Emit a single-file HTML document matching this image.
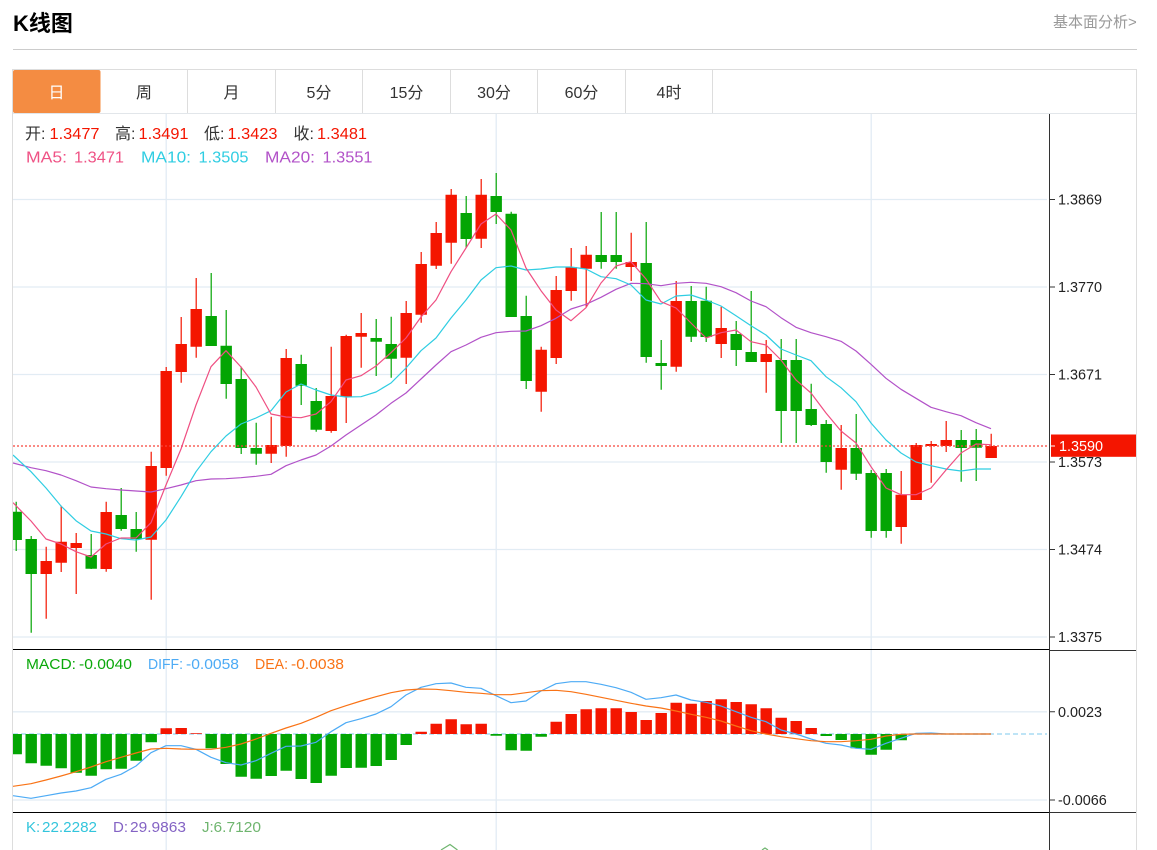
<!DOCTYPE html>
<html lang="zh">
<head>
<meta charset="utf-8">
<title>K线图</title>
<style>
html,body{margin:0;padding:0;background:#fff;width:1157px;height:850px;overflow:hidden}
svg{display:block}
text{font-family:"Liberation Sans","Noto Sans CJK SC",sans-serif;white-space:pre}
.ax{font-size:14.4px;fill:#222}
.tab{font-size:16px;fill:#333;text-anchor:middle}
.i{font-size:16px}
.m{font-size:15px}
</style>
</head>
<body>
<svg width="1157" height="850" viewBox="0 0 1157 850" xmlns="http://www.w3.org/2000/svg">
<defs><clipPath id="c"><rect x="13" y="114" width="1036" height="736"/></clipPath></defs>

<text x="13" y="31" font-size="22" font-weight="700" fill="#000">K线图</text>
<text x="1053" y="27" font-size="15" fill="#999">基本面分析&gt;</text>
<path d="M13 49.500H1137" stroke="#ccc" stroke-width="1"/>

<!-- panel -->
<path d="M12.500 850V69.500H1136.500V850" fill="none" stroke="#ddd"/>
<path d="M13 113.500H1136" stroke="#e2e6ea"/>
<path d="M187.500 70V113M275.500 70V113M362.500 70V113M450.500 70V113M537.500 70V113M625.500 70V113M712.500 70V113" stroke="#ddd"/>
<rect x="13" y="70" width="87.500" height="43" rx="2" fill="#f48c42"/>
<text x="56.500" y="98" class="tab" style="fill:#fff">日</text>
<text x="144" y="98" class="tab">周</text>
<text x="231.500" y="98" class="tab">月</text>
<text x="319" y="98" class="tab">5分</text>
<text x="406.500" y="98" class="tab">15分</text>
<text x="494" y="98" class="tab">30分</text>
<text x="581.500" y="98" class="tab">60分</text>
<text x="669" y="98" class="tab">4时</text>

<!-- grid -->
<g stroke="#e2ecf4" stroke-width="1.300" fill="none">
<path d="M166.200 114V850M496.200 114V850M871.200 114V850"/>
<path d="M13 199.500H1047M13 287H1047M13 374.500H1047M13 462H1047M13 549.500H1047M13 637H1047M13 711.800H1047M13 800H1047"/>
</g>
<path d="M13 734H1047" stroke="#a8dcf3" stroke-width="1.500" stroke-dasharray="5 3"/>

<g clip-path="url(#c)" fill="none">
<!-- red wicks -->
<path stroke="#f41500" stroke-width="1.200" d="M46.200 546.700V618.700M61.200 505.700V572M76.200 533V594M106.200 501.700V571.700M151.200 451.700V599.700M166.200 367V475.700M181.200 317V382.700M196.200 278V357.700M271.200 416.700V463M286.200 349V456.700M331.200 346.700V432.700M346.200 334.700V423M361.200 313V367.700M406.200 301V384M421.200 252V322.700M436.200 222V269M451.200 189V263.700M481.200 179V248M541.200 346.700V411.700M556.200 276V364M571.200 248V300.700M586.200 246V306.700M631.200 232.700V281M676.200 281V371.700M721.200 306.700V358M766.200 340V392.700M841.200 425V489.700M901.200 471V543.700M916.200 443V500M931.200 441V482.700M946.200 421V452M991.200 433.700V458"/>
<!-- red bodies -->
<path stroke="#f41500" stroke-width="11.400" d="M46.200 561V574M61.200 541.700V562.700M76.200 543V548M106.200 512V569M151.200 466V539.700M166.200 371V468M181.200 344V372M196.200 309V346.700M271.200 445V453.700M286.200 358V446M331.200 396V431M346.200 336V396.700M361.200 333V336.700M406.200 313V357.700M421.200 264V314.700M436.200 233V265.700M451.200 194.700V242.700M481.200 194.700V238.700M541.200 349.700V391.700M556.200 290V358M571.200 267V291M586.200 254.700V268.700M631.200 262V267M676.200 301V366.700M721.200 328V344M766.200 354V362M841.200 448V469.700M901.200 494.700V527M916.200 445V500M931.200 444V446M946.200 440V446M991.200 446V458"/>
<!-- green wicks -->
<path stroke="#03a503" stroke-width="1.200" d="M16.200 501.700V551M31.200 536V632.700M91.200 534V569M121.200 488V530.700M136.200 512V551.700M211.200 273V346M226.200 310V398.700M241.200 366.700V454M256.200 422.700V464.700M301.200 354.700V405M316.200 388V431.700M376.200 319V376M391.200 316.700V377.700M466.200 196V248M496.200 173V224M511.200 211.700V317M526.200 295.700V389M601.200 212V268.700M616.200 212V268.700M646.200 222V362.700M661.200 340V389.700M691.200 286V342M706.200 286.700V342M736.200 321V366M751.200 291V362M781.200 339V443M796.200 339V443M811.200 383.700V426M826.200 420V472.700M856.200 414V480M871.200 470V537.700M886.200 469V537.700M961.200 430V481.700M976.200 429V481"/>
<!-- green bodies -->
<path stroke="#03a503" stroke-width="11.400" d="M16.200 511.700V540M31.200 539V574M91.200 555V568.700M121.200 515V529M136.200 529V539M211.200 316V346M226.200 345.700V384M241.200 379V448M256.200 448V453.700M301.200 364V385.700M316.200 401V429.700M376.200 338V341.700M391.200 344V358.700M466.200 213V239M496.200 196V212M511.200 213.700V317M526.200 316V381M601.200 255V262M616.200 255V262M646.200 263V357M661.200 363V366M691.200 301V336.700M706.200 300.700V337M736.200 334V350M751.200 352V362M781.200 360V411M796.200 360V411M811.200 409V425M826.200 424V462M856.200 448V473.700M871.200 473V531M886.200 473V531M961.200 440V448M976.200 440V447.700"/>

<!-- price line -->
<path d="M13 446H1047" stroke="#f8453a" stroke-width="1.300" stroke-dasharray="2 2"/>

<!-- MA20 -->
<polyline stroke="#b252c8" stroke-width="1.200" stroke-linejoin="round" points="13,463 31,467.700 46,470.700 61,475 76,480.700 91,487 106,488.700 121,490 136,491 151,492 166,488.700 181,485 196,480.700 211,479 226,478.700 241,477.700 256,476.300 271,474.300 286,465.700 301,460 316,455 331,446 346,435 361,425 376,415 391,403.300 406,393 421,379 436,365 451,351.700 466,345 481,337.300 496,332.700 511,331.300 526,331 541,325.700 556,318.300 571,309 586,304.300 601,297.300 616,289.300 631,283.300 646,283.700 661,285.700 676,283.300 691,282.300 706,283.300 721,286.700 736,292.700 751,301 766,306.700 781,317.700 796,327.300 811,332.700 826,336.700 841,341.300 856,351 871,364.300 886,378.300 901,389.300 916,398.300 931,407.300 946,411.700 961,415.700 976,422.700 991,428.700"/>
<!-- MA10 -->
<polyline stroke="#2fcde2" stroke-width="1.200" stroke-linejoin="round" points="13,455 31,471.700 46,488 61,506 76,520.700 91,531 106,534 121,538.700 136,540 151,537 166,520 181,496.700 196,471.700 211,451.700 226,436 241,424 256,418 271,410.700 286,392 301,384 316,390 331,395 346,397 361,396.700 376,392 391,383 406,368 421,350.700 436,338 451,318 466,300 481,280 496,267.700 511,266 526,270 541,269 556,267 571,267 586,269 601,276.700 616,278.700 631,285 646,300 661,304 676,296 691,295 706,300 721,306 736,315.700 751,325.700 766,335 781,349 796,355 811,360.700 826,376.700 841,387.700 856,401.700 871,423 886,440 901,453 916,462 931,465.700 946,469 961,471 976,469 991,469"/>
<!-- MA5 -->
<polyline stroke="#ef4f82" stroke-width="1.200" stroke-linejoin="round" points="13,502.700 31,521 46,539 61,544 76,551.700 91,557 106,544 121,538 136,538 151,522.700 166,485 181,449 196,405 211,366.700 226,350.700 241,367 256,387 271,414 286,417 301,417.700 316,414 331,401.700 346,380 361,375.700 376,366 391,352.700 406,338 421,317 436,300 451,271.700 466,248 481,224 496,214 511,230 526,268 541,290.700 556,310 571,320.700 586,307.700 601,283 616,266 631,261.700 646,279 661,301.700 676,308 691,323 706,338 721,332.700 736,330 751,341.700 766,345 781,360 796,380 811,393 826,413 841,431 856,443 871,466.700 886,488 901,494.700 916,494.700 931,488 946,470 961,453 976,444 991,444.700"/>

<!-- MACD bars -->
<path stroke="#03a503" stroke-width="11.400" d="M16.200 734V754.300M31.200 734V763.300M46.200 734V765.700M61.200 734V768.300M76.200 734V772.700M91.200 734V775.700M106.200 734V769.300M121.200 734V768.700M136.200 734V760.700M151.200 734V742.300M211.200 734V748.300M226.200 734V764M241.200 734V776.700M256.200 734V778.700M271.200 734V776M286.200 734V770.700M301.200 734V779M316.200 734V783M331.200 734V775.700M346.200 734V768M361.200 734V767.700M376.200 734V766M391.200 734V760M406.200 734V745M496.200 734V735.700M511.200 734V750.300M526.200 734V750.700M541.200 734V736.700M826.200 734V736M841.200 734V740M856.200 734V748.300M871.200 734V754.700M886.200 734V749.700M901.200 734V740.300"/>
<path stroke="#f41500" stroke-width="11.400" d="M166.200 734V728.300M181.200 734V728M196.200 734V733.300M421.200 734V731.700M436.200 734V723.700M451.200 734V719.300M466.200 734V724.300M481.200 734V723.700M556.200 734V721.700M571.200 734V714M586.200 734V709.300M601.200 734V708.300M616.200 734V708.300M631.200 734V712M646.200 734V720M661.200 734V713M676.200 734V702.700M691.200 734V703.700M706.200 734V701M721.200 734V699.300M736.200 734V702M751.200 734V704.300M766.200 734V708.300M781.200 734V717.700M796.200 734V721M811.200 734V728"/>

<!-- DIFF -->
<polyline stroke="#4dabf5" stroke-width="1.200" stroke-linejoin="round" points="13,795.700 31,798.300 46,795.700 61,793 76,791 91,787.700 106,779.300 121,774.300 136,766 151,752.700 166,745.700 181,745.700 196,749.300 211,757.300 226,762.700 241,765 256,760.700 271,753.300 286,746.300 301,746 316,742.300 331,731.700 346,722.700 361,718.700 376,714 391,706.700 406,695 421,687.300 436,683.700 451,683 466,687.300 481,688.300 496,695.700 511,702.700 526,701 541,691 556,683.700 571,681.700 586,681.700 601,684.300 616,687.700 631,692.300 646,699.300 661,697.700 676,695 691,700 706,702.300 721,706 736,711.700 751,717.300 766,721.700 781,730 796,734 811,739 826,743.300 841,745 856,748.300 871,749.300 886,743.300 901,738.300 916,733.300 931,733 946,734 991,734"/>
<!-- DEA -->
<polyline stroke="#f97316" stroke-width="1.200" stroke-linejoin="round" points="13,786.300 31,783.700 46,780 61,776 76,771.700 91,767 106,761.700 121,757.300 136,753 151,749 166,748.300 181,749 196,749.300 211,749.300 226,747.300 241,744 256,739 271,733.300 286,728 301,723.300 316,717.300 331,710.700 346,705.700 361,701 376,696.700 391,692.700 406,690 421,689 436,689.300 451,690.700 466,692.300 481,693.300 496,694.700 511,694.700 526,692.700 541,690.700 556,690.300 571,691.700 586,694.300 601,697.300 616,700.300 631,703.300 646,706 661,708 676,711 691,714.300 706,717.300 721,721 736,726 751,730.700 766,734 781,736.700 796,738.700 811,740.700 826,741.700 841,741.700 856,740.700 871,739.300 886,736 901,734.300 916,734 991,734"/>

<!-- KDJ peek -->
<path stroke="#6fb56f" stroke-width="1.200" d="M441 850L450 844.500L457.500 850M762 850L765 848L768 850"/>
</g>

<!-- axis -->
<path d="M1049.500 114V850" stroke="#333" stroke-width="1"/>
<path d="M13 649.500H1049M13 812.500H1049" stroke="#000" stroke-width="1"/>
<path d="M1049 650.500H1136M1049 812.500H1136" stroke="#333" stroke-width="1"/>
<path d="M1050 199.500H1055M1050 287H1055M1050 374.500H1055M1050 462H1055M1050 549.500H1055M1050 637H1055M1050 711.800H1055M1050 800H1055" stroke="#333"/>

<text x="1058" y="204.500" class="ax">1.3869</text>
<text x="1058" y="292" class="ax">1.3770</text>
<text x="1058" y="379.500" class="ax">1.3671</text>
<text x="1058" y="467" class="ax">1.3573</text>
<text x="1058" y="554.500" class="ax">1.3474</text>
<text x="1058" y="642" class="ax">1.3375</text>
<text x="1058" y="717" class="ax">0.0023</text>
<text x="1058" y="805" class="ax">-0.0066</text>

<rect x="1051" y="434.500" width="85" height="22.300" fill="#f41500"/>
<path d="M1051 446H1055" stroke="#fff"/>
<text x="1059" y="451" class="ax" style="fill:#fff">1.3590</text>

<!-- legends -->
<text x="25" y="139" class="i" fill="#333">开:</text><text x="49.500" y="139" class="i" fill="#f41500" textLength="50" lengthAdjust="spacingAndGlyphs">1.3477</text>
<text x="115" y="139" class="i" fill="#333">高:</text><text x="138.500" y="139" class="i" fill="#f41500" textLength="50" lengthAdjust="spacingAndGlyphs">1.3491</text>
<text x="204" y="139" class="i" fill="#333">低:</text><text x="227.500" y="139" class="i" fill="#f41500" textLength="50" lengthAdjust="spacingAndGlyphs">1.3423</text>
<text x="293.500" y="139" class="i" fill="#333">收:</text><text x="317" y="139" class="i" fill="#f41500" textLength="50" lengthAdjust="spacingAndGlyphs">1.3481</text>

<text x="26" y="162.500" class="i" fill="#ef5285" textLength="41" lengthAdjust="spacingAndGlyphs">MA5:</text><text x="74" y="162.500" class="i" fill="#ef5285" textLength="50" lengthAdjust="spacingAndGlyphs">1.3471</text>
<text x="141" y="162.500" class="i" fill="#2fcde2" textLength="50" lengthAdjust="spacingAndGlyphs">MA10:</text><text x="198.500" y="162.500" class="i" fill="#2fcde2" textLength="50" lengthAdjust="spacingAndGlyphs">1.3505</text>
<text x="265" y="162.500" class="i" fill="#b252c8" textLength="50" lengthAdjust="spacingAndGlyphs">MA20:</text><text x="322.500" y="162.500" class="i" fill="#b252c8" textLength="50" lengthAdjust="spacingAndGlyphs">1.3551</text>

<text x="26" y="669" class="m" fill="#0aa80a" textLength="50" lengthAdjust="spacingAndGlyphs">MACD:</text><text x="79" y="669" class="m" fill="#0aa80a" textLength="53" lengthAdjust="spacingAndGlyphs">-0.0040</text>
<text x="148" y="669" class="m" fill="#4dabf5" textLength="35" lengthAdjust="spacingAndGlyphs">DIFF:</text><text x="186" y="669" class="m" fill="#4dabf5" textLength="53" lengthAdjust="spacingAndGlyphs">-0.0058</text>
<text x="255" y="669" class="m" fill="#f97316" textLength="33" lengthAdjust="spacingAndGlyphs">DEA:</text><text x="291" y="669" class="m" fill="#f97316" textLength="53" lengthAdjust="spacingAndGlyphs">-0.0038</text>

<text x="26" y="832" class="m" fill="#33c5dc">K:</text><text x="42" y="832" class="m" fill="#33c5dc" textLength="55" lengthAdjust="spacingAndGlyphs">22.2282</text>
<text x="113" y="832" class="m" fill="#8463c4">D:</text><text x="130" y="832" class="m" fill="#8463c4" textLength="56" lengthAdjust="spacingAndGlyphs">29.9863</text>
<text x="202" y="832" class="m" fill="#6fb56f">J:</text><text x="213.500" y="832" class="m" fill="#6fb56f" textLength="47.500" lengthAdjust="spacingAndGlyphs">6.7120</text>
</svg>
</body>
</html>
